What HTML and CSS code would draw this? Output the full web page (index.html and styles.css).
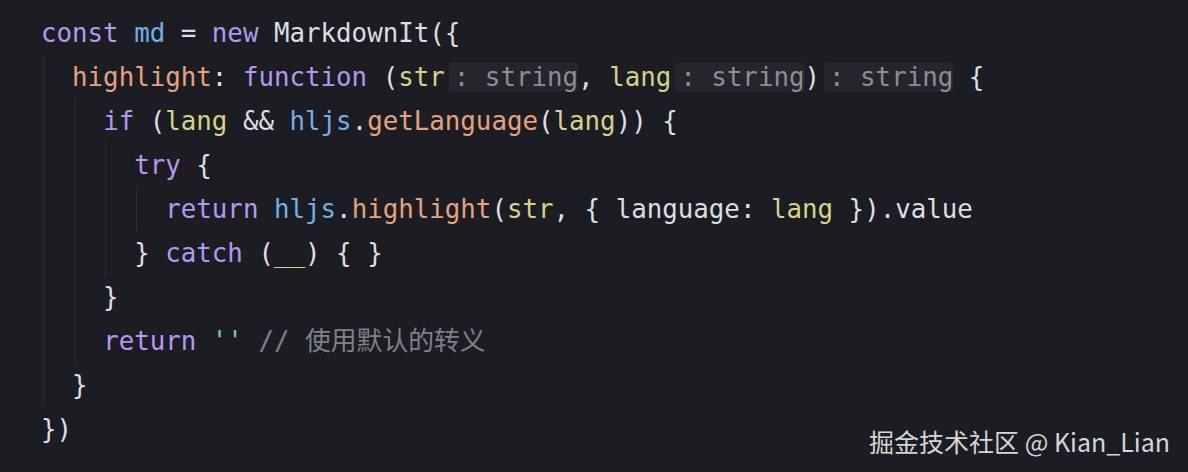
FILE: index.html
```html
<!DOCTYPE html>
<html lang="zh">
<head>
<meta charset="utf-8">
<link rel="stylesheet" href="styles.css">
</head>
<body>
<div class="editor">
  <div class="code">
    <div class="ln"><span class="kw">const</span> <span class="var">md</span> = <span class="kw">new</span> MarkdownIt({</div>
    <div class="guide g1">
      <div class="ln">  <span class="prop">highlight</span>: <span class="kw">function</span> (<span class="param">str</span><span class="hint">: string</span>, <span class="param">lang</span><span class="hint">: string</span>)<span class="hint">: string</span> {</div>
      <div class="guide g2">
        <div class="ln">    <span class="kw">if</span> (<span class="param">lang</span> &amp;&amp; <span class="var">hljs</span>.<span class="fn">getLanguage</span>(<span class="param">lang</span>)) {</div>
        <div class="guide g3">
          <div class="ln">      <span class="kw">try</span> {</div>
          <div class="guide g4">
            <div class="ln">        <span class="kw">return</span> <span class="var">hljs</span>.<span class="fn">highlight</span>(<span class="param">str</span>, { language: <span class="param">lang</span> }).value</div>
          </div>
          <div class="ln">      } <span class="kw">catch</span> (<span class="param">__</span>) { }</div>
        </div>
        <div class="ln">    }</div>
        <div class="ln">    <span class="kw">return</span> <span class="str">''</span> <span class="cmt">// 使用默认的转义</span></div>
      </div>
      <div class="ln">  }</div>
    </div>
    <div class="ln">})</div>
  </div>
  <div class="watermark">掘金技术社区 @ Kian_Lian</div>
</div>
</body>
</html>
```

FILE: styles.css
```css
html, body {
  margin: 0;
  padding: 0;
  background: #1b1d22;
}

.editor {
  position: relative;
  width: 1188px;
  height: 472px;
  overflow: hidden;
  background: #1b1d22;
}

.code {
  padding: 11px 0 0 41px;
  font-family: "DejaVu Sans Mono", "Noto Sans CJK SC", monospace;
  font-size: 25.8px;
  line-height: 44px;
  color: #dcdee2;
}

.ln {
  white-space: pre;
  height: 44px;
}

.guide {
  --gc: #2c2e33;
}
.g1 { background: linear-gradient(90deg, transparent 2px, var(--gc) 2px, var(--gc) 3px, transparent 3px); }
.g2 { background: linear-gradient(90deg, transparent calc(2ch + 2px), var(--gc) calc(2ch + 2px), var(--gc) calc(2ch + 3px), transparent calc(2ch + 3px)); }
.g3 { background: linear-gradient(90deg, transparent calc(4ch + 2px), var(--gc) calc(4ch + 2px), var(--gc) calc(4ch + 3px), transparent calc(4ch + 3px)); }
.g4 { background: linear-gradient(90deg, transparent calc(6ch + 2px), var(--gc) calc(6ch + 2px), var(--gc) calc(6ch + 3px), transparent calc(6ch + 3px)); }

.kw { color: #b597f2; }
.var { color: #72aeea; }
.prop { color: #e6a27e; }
.fn { color: #e6a27e; }
.param { color: #d6d28b; }
.str { color: #6fd39d; }
.cmt { color: #7e8288; }

.hint {
  display: inline-block;
  margin-left: 4px;
  padding-left: 5px;
  line-height: 30px;
  background: #24262b;
  color: #8b8e93;
  border-radius: 4px;
}

.watermark {
  position: absolute;
  right: 18px;
  top: 423px;
  font-family: "Noto Sans CJK SC", "Noto Sans", sans-serif;
  font-size: 25px;
  color: #d6d6d6;
  white-space: nowrap;
}
```
